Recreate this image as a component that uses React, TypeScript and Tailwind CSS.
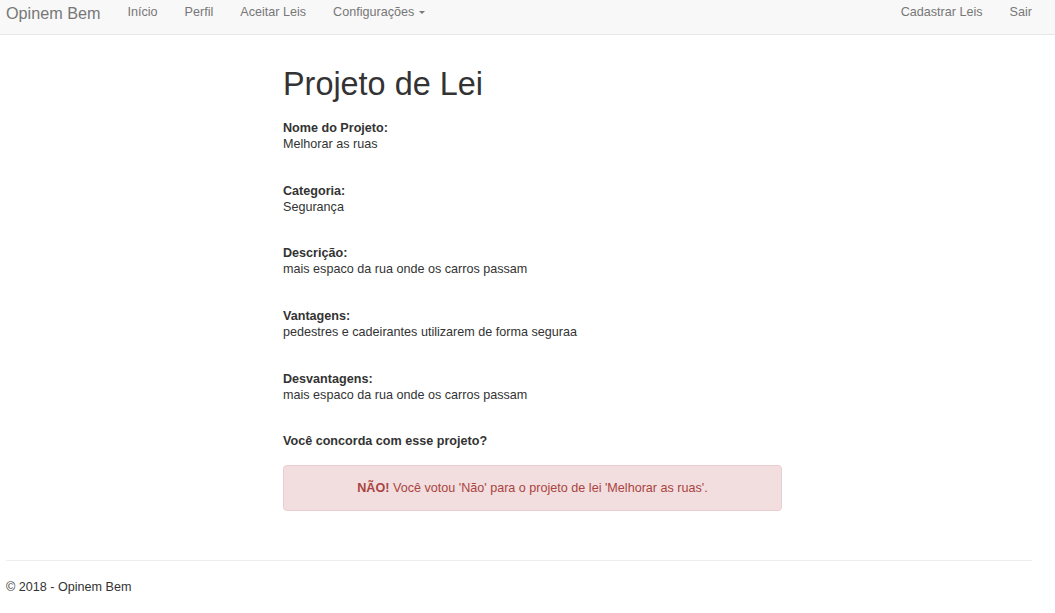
const fields = [
  { label: 'Nome do Projeto:', value: 'Melhorar as ruas' },
  { label: 'Categoria:', value: 'Segurança' },
  { label: 'Descrição:', value: 'mais espaco da rua onde os carros passam' },
  { label: 'Vantagens:', value: 'pedestres e cadeirantes utilizarem de forma seguraa' },
  { label: 'Desvantagens:', value: 'mais espaco da rua onde os carros passam' },
];

const NavLink = ({ children }: { children: React.ReactNode }) => (
  <a className="px-[13.5px] text-[12.6px] leading-5 text-[#777] hover:text-[#333]" href="#">
    {children}
  </a>
);

const App = () => {
  return (
    <div className="min-h-screen bg-white font-['Liberation_Sans',Arial,sans-serif] text-[12.6px] text-[#333]">
      <nav className="flex h-[35px] items-start justify-between border-b border-[#e7e7e7] bg-[#f8f8f8] pt-[2px]">
        <div className="flex items-start">
          <a className="ml-[6px] mr-[13.5px] mt-[1px] text-[16.2px] leading-5 text-[#777]" href="#">
            Opinem Bem
          </a>
          <NavLink>Início</NavLink>
          <NavLink>Perfil</NavLink>
          <NavLink>Aceitar Leis</NavLink>
          <a className="flex items-center px-[13.5px] text-[12.6px] leading-5 text-[#777]" href="#">
            Configurações
            <span className="ml-[5px] inline-block h-0 w-0 border-x-[3.5px] border-t-[3.5px] border-x-transparent border-t-[#777]" />
          </a>
        </div>
        <div className="mr-[9.5px] flex items-start">
          <NavLink>Cadastrar Leis</NavLink>
          <NavLink>Sair</NavLink>
        </div>
      </nav>

      <main className="ml-[283px] w-[499px]">
        <h1 className="mt-[32px] text-[32.4px] leading-[35.6px] font-normal">Projeto de Lei</h1>
        <div className="mt-[17.4px]">
          {fields.map((f) => (
            <div key={f.label} className="mb-[30.67px]">
              <div className="font-bold leading-4">{f.label}</div>
              <div className="leading-4">{f.value}</div>
            </div>
          ))}
          <div className="font-bold leading-4">Você concorda com esse projeto?</div>
        </div>
        <div className="mt-[16px] flex h-[46px] items-center justify-center rounded border border-[#ebccd1] bg-[#f2dede] text-[#a94442]">
          <span>
            <strong>NÃO!</strong> Você votou 'Não' para o projeto de lei 'Melhorar as ruas'.
          </span>
        </div>
      </main>

      <footer className="mt-[49px]">
        <hr className="ml-[6px] w-[1026px] border-t border-[#eee]" />
        <p className="ml-[6px] mt-[16px] leading-5">© 2018 - Opinem Bem</p>
      </footer>
    </div>
  );
};

export default App;
